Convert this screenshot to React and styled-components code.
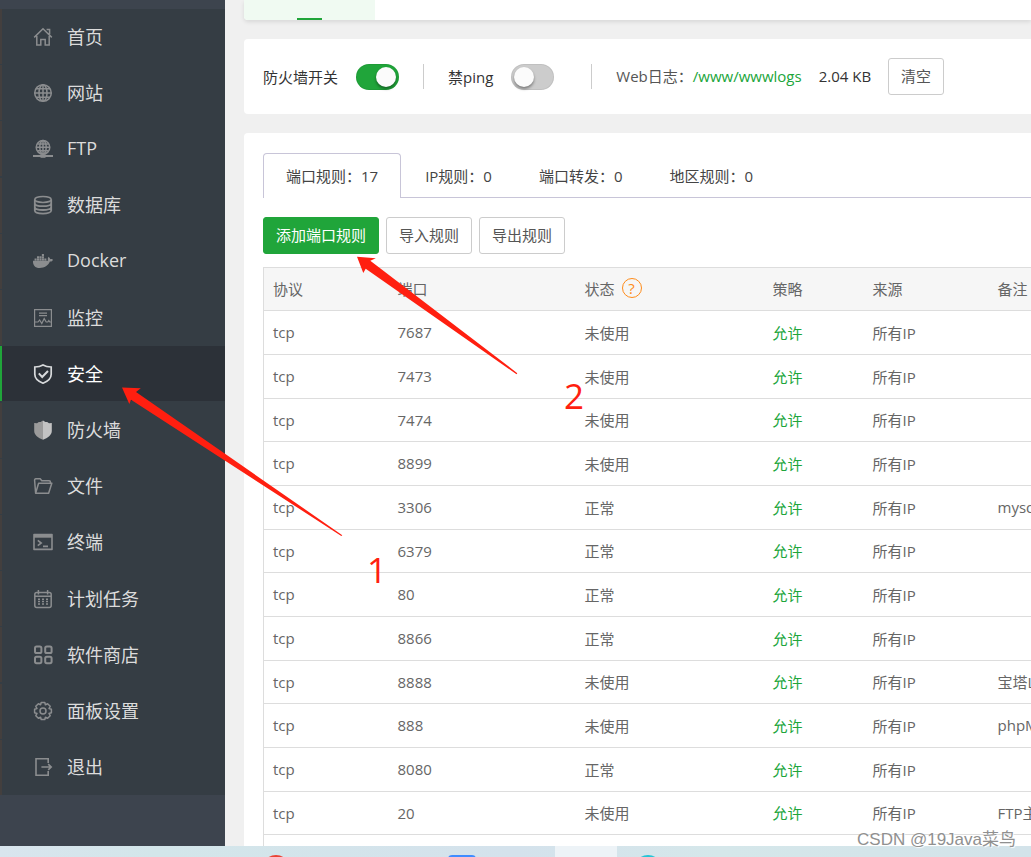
import React, { useState } from "react";
import styled, { createGlobalStyle } from "styled-components";
import { FaDocker } from "react-icons/fa";

const GlobalStyle = createGlobalStyle`
  * {
    box-sizing: border-box;
  }
  body {
    margin: 0;
    overflow: hidden;
    font-family: "Open Sans", "Noto Sans CJK SC", sans-serif;
    font-size: 15px;
    color: #666;
  }
  button, input {
    font: inherit;
    margin: 0;
  }
`;

const Screen = styled.div`
  position: relative;
  height: 100vh;
  display: flex;
  flex-direction: column;
  overflow: hidden;
`;

const Panel = styled.div`
  flex: 1;
  min-height: 0;
  display: flex;
  overflow: hidden;
  background: #f0f0f0;
`;

//Sidebar
const Sidebar = styled.nav`
  flex: 0 0 225px;
  padding-top: 9px;
  background: #3d444e;
`;

const Menu = styled.ul`
  list-style: none;
  margin: 0;
  padding: 0;
  min-height: 786px;
  display: flex;
  flex-direction: column;
  justify-content: space-between;
  background: #353d44;
`;

const MenuLink = styled.a`
  display: flex;
  align-items: center;
  gap: 14px;
  height: 55px;
  padding-left: 31px;
  border-left: 2px solid ${(props) => (props.$active ? "#20a53a" : "#433f3e")};
  background: ${(props) => (props.$active ? "#2c3138" : "transparent")};
  color: ${(props) => (props.$active ? "#fff" : "#dcdcdc")};
  font-size: 18px;
  text-decoration: none;
  svg {
    flex: none;
    width: 20px;
    height: 20px;
    color: ${(props) => (props.$active ? "#d8dadc" : "#8b8d8f")};
  }
`;

const MenuText = styled.span`
  padding-bottom: 2px;
`;

//Content
const Content = styled.main`
  flex: 1;
  min-width: 0;
  padding-left: 19px;
  overflow: hidden;
  display: flex;
  flex-direction: column;
  gap: 19px;
`;

const TopTabs = styled.div`
  flex: none;
  display: flex;
  height: 20px;
  background: #fff;
  border-radius: 0 0 0 4px;
  box-shadow: 0 2px 4px rgba(0, 0, 0, 0.1);
`;

const TopTab = styled.div`
  width: 131px;
  display: flex;
  justify-content: center;
  align-items: flex-end;
  background: #f0faf2;
  border-radius: 0 0 0 4px;
`;

const TopTabLine = styled.span`
  width: 25px;
  height: 2px;
  background: #20a53a;
`;

const StatusCard = styled.section`
  flex: none;
  display: flex;
  align-items: center;
  height: 75px;
  padding: 0 19px;
  background: #fff;
  border-radius: 4px 0 0 4px;
  color: #333;
  white-space: nowrap;
`;

const SwitchLabel = styled.label`
  display: flex;
  align-items: center;
  gap: 18px;
`;

const Switch = styled.input`
  appearance: none;
  display: flex;
  width: 43px;
  height: 26px;
  padding: 3px;
  border-radius: 13px;
  background: #ccc;
  box-shadow: inset 0 0 0 1px rgba(0, 0, 0, 0.06);
  cursor: pointer;
  &::before {
    content: "";
    width: 20px;
    height: 20px;
    border-radius: 50%;
    background: #fbfbfb;
    box-shadow: 0 2px 3px rgba(0, 0, 0, 0.4);
  }
  &:checked {
    background: #20a53a;
    justify-content: flex-end;
  }
`;

const Divider = styled.span`
  width: 1px;
  height: 25px;
  margin: 0 24px 0 ${(props) => props.$before}px;
  background: #ccc;
`;

const LogLabel = styled.span`
  padding-bottom: 2px;
  color: #555;
`;

const LogPath = styled.a`
  padding-bottom: 2px;
  color: #20a53a;
  text-decoration: none;
`;

const LogSize = styled.span`
  margin: 0 17px;
  padding-bottom: 2px;
`;

const Button = styled.button`
  height: 37px;
  padding: 0 12px 2px;
  border: 1px solid ${(props) => (props.$primary ? "#20a53a" : "#ccc")};
  border-radius: 3px;
  background: ${(props) => (props.$primary ? "#20a53a" : "#fff")};
  color: ${(props) => (props.$primary ? "#fff" : "#555")};
  white-space: nowrap;
  cursor: pointer;
`;

const RulesCard = styled.section`
  flex: none;
  padding: 20px 0 0 19px;
  background: #fff;
  border-radius: 4px 0 0 4px;
`;

const Tabs = styled.div`
  display: flex;
  gap: 1px;
  height: 45px;
  box-shadow: inset 0 -1px 0 #c8c5d8;
`;

const Tab = styled.button`
  padding: 0 22px 2px;
  border: 1px solid ${(props) => (props.$active ? "#c8c5d8" : "transparent")};
  border-bottom: none;
  border-radius: 4px 4px 0 0;
  background: ${(props) => (props.$active ? "#fff" : "transparent")};
  color: #444;
  white-space: nowrap;
  cursor: pointer;
`;

const Toolbar = styled.div`
  display: flex;
  gap: 7px;
  padding: 19px 0 13px;
`;

const Table = styled.table`
  width: 1000px;
  table-layout: fixed;
  border-collapse: collapse;
  border: 1px solid #ddd;
`;

const HeadCell = styled.th`
  width: ${(props) => props.$width};
  height: 43px;
  padding: 0 9px 2px;
  background: #f6f6f6;
  border-bottom: 1px solid #ddd;
  font-weight: 400;
  text-align: left;
`;

const HeadLabel = styled.span`
  display: flex;
  align-items: center;
  gap: 7px;
`;

const Help = styled.a`
  display: flex;
  align-items: center;
  justify-content: center;
  width: 20px;
  height: 20px;
  border: 1px solid #ff8c1a;
  border-radius: 50%;
  color: #ff8c1a;
  text-decoration: none;
`;

const Row = styled.tr`
  height: 44px;
  &:nth-child(3n) {
    height: 43px;
  }
`;

const Cell = styled.td`
  padding: 0 9px 1px;
  border-bottom: 1px solid #ddd;
  color: ${(props) => (props.$allow ? "#20a53a" : "#666")};
  white-space: nowrap;
`;

//Desktop bar under the browser
const Taskbar = styled.footer`
  flex: none;
  display: flex;
  height: 11px;
  padding-left: 245px;
  overflow: hidden;
  background: linear-gradient(90deg, #d9e5ee, #d3e6ea 15%, #d4e2ec 50%, #d5e7ea 70%, #d3e3ea);
`;

const TaskSlot = styled.span`
  flex: 0 0 62px;
  display: flex;
  justify-content: center;
  padding-top: 9px;
  background: ${(props) => (props.$active ? "#edf3f7" : "transparent")};
`;

const TaskIcon = styled.span`
  flex: none;
  width: 28px;
  height: 28px;
  border-radius: ${(props) => (props.$square ? "4px" : "50%")};
  background: ${(props) => props.$color};
`;

//Marks drawn over the page
const Marks = styled.svg`
  position: absolute;
  top: 0;
  left: 0;
  pointer-events: none;
`;

const StepNumber = styled.span`
  position: absolute;
  left: ${(props) => props.$x}px;
  top: ${(props) => props.$y}px;
  font-size: 35px;
  line-height: 36px;
  color: #ff1f10;
`;

const Watermark = styled.span`
  position: absolute;
  right: 15px;
  bottom: 5px;
  font-family: "Liberation Sans", "Noto Sans CJK SC", sans-serif;
  font-size: 17px;
  line-height: 24px;
  color: #909090;
  text-shadow: 1px 1px 1px #fff;
`;

const Icon = ({ children }) => (
  <svg viewBox="0 0 20 20" fill="none" stroke="currentColor" strokeWidth="1.5" aria-hidden="true">
    {children}
  </svg>
);

const icons = {
  home: (
    <Icon>
      <path d="M1.2 10.4 10 1.8l8.800 8.600M3.800 9v9h4v-5.400h4.400V18h4V9M13.600 2.600h3v4.600" />
    </Icon>
  ),
  globe: (
    <Icon>
      <circle cx="10" cy="10" r="8.3" />
      <ellipse cx="10" cy="10" rx="4" ry="8.3" />
      <path d="M10 1.7v16.6M1.7 10h16.6M3 5.8h14M3 14.2h14" />
    </Icon>
  ),
  ftp: (
    <Icon>
      <circle cx="10" cy="8.3" r="6.8" />
      <ellipse cx="10" cy="8.3" rx="3.2" ry="6.8" />
      <path d="M10 1.5v15M3.2 8.3h13.6M4.4 4.9h11.2M4.4 11.7h11.2" />
      <path d="M0 17h20" strokeWidth="2" />
      <path d="M7.5 17h5" strokeWidth="3.6" />
    </Icon>
  ),
  database: (
    <Icon>
      <ellipse cx="10" cy="4.4" rx="8.2" ry="3" />
      <path d="M1.8 4.4v11.200c0 1.800 3.600 3 8.200 3s8.200-1.200 8.200-3V4.400M1.800 8.200c0 1.800 3.600 3 8.200 3s8.200-1.200 8.200-3M1.800 12c0 1.800 3.600 3 8.200 3s8.200-1.200 8.200-3" strokeWidth="1.800" />
    </Icon>
  ),
  docker: <FaDocker aria-hidden="true" />,
  monitor: (
    <Icon>
      <path d="M1.6 1.6h16.8v16.8H1.6zM6 5.2h8M6 7.6h8" strokeWidth="1.2" />
      <path d="M2 14h3l1.6-2 2.2 3.6 2.4-5 2 3.4h1.6l1-1.4 1 1.4h1.4" strokeWidth="1.2" />
    </Icon>
  ),
  safe: (
    <Icon>
      <path d="M10 .9C7.4 2.4 4.8 2.9 1.8 3v7.2c0 4.2 3.6 7.2 8.2 9 4.6-1.8 8.2-4.8 8.2-9V3c-3-.1-5.600-.6-8.200-2.100z" strokeWidth="1.7" />
      <path d="m5.8 9.4 3.4 3.6 5.8-6" strokeWidth="2" />
    </Icon>
  ),
  firewall: (
    <Icon>
      <path d="M10 .4 7.6 2H5.8L4 3.2 1.2 3v8c0 4 4 7 8.8 8.8z" fill="#9b9b9b" stroke="none" />
      <path d="M10 .4 12.4 2h1.8L16 3.2l2.8-.2v8c0 4-4 7-8.8 8.8z" fill="#c3c3c3" stroke="none" />
    </Icon>
  ),
  folder: (
    <Icon>
      <path d="M2.6 17 1.6 4.2c0-.8.4-1.4 1.2-1.4h4.4l1.6 2h7.4c.8 0 1.2.4 1.2 1.2v1.2M2.6 17.2h13L18.8 7.2H5.6z" strokeLinejoin="round" />
    </Icon>
  ),
  terminal: (
    <Icon>
      <path d="M1 2.6h18v14.8H1z" strokeLinejoin="round" strokeWidth="1.6" />
      <path d="M1 4.2h18" strokeWidth="3" />
      <path d="m4.8 8.4 3.4 2.6-3.4 2.6M10 14.4h5" strokeWidth="1.6" />
    </Icon>
  ),
  calendar: (
    <Icon>
      <rect x="1.8" y="3.6" width="16.4" height="14.8" rx="2" />
      <path d="M5.4 1v4.4M14.6 1v4.4M2 7.2h16" />
      <path d="M5 10.2h10M5 12.6h10M5 15h10" strokeDasharray="2 2" />
    </Icon>
  ),
  apps: (
    <Icon>
      <rect x="2" y="1.6" width="6.4" height="6.4" rx="1.6" strokeWidth="2" />
      <rect x="12.200" y="1.6" width="6.4" height="6.4" rx="1.6" strokeWidth="2" />
      <rect x="2" y="11.800" width="6.4" height="6.4" rx="1.6" strokeWidth="2" />
      <rect x="12.200" y="11.800" width="6.4" height="6.4" rx="1.6" strokeWidth="2" />
    </Icon>
  ),
  settings: (
    <Icon>
      <path d="M8.2 1.5h3.6l.6 2.2 2.2-1 2.6 2.6-1.2 2.2 2.4.8v3.4l-2.4.8 1.2 2.2-2.6 2.6-2.2-1-.6 2.2H8.2l-.6-2.2-2.2 1-2.6-2.6L4 12.5l-2.400-.8V8.300L4 7.500 2.800 5.300l2.600-2.600 2.200 1z" strokeLinejoin="round" />
      <circle cx="10" cy="10" r="3" />
    </Icon>
  ),
  logout: (
    <Icon>
      <path d="M15.2 6V1.8H3v16.4h12.2V14M8.4 10h9.400M15.200 7.200l3 2.800-3 2.800" strokeWidth="1.6" />
    </Icon>
  ),
};

const menu = [
  { icon: "home", text: "首页" },
  { icon: "globe", text: "网站" },
  { icon: "ftp", text: "FTP" },
  { icon: "database", text: "数据库" },
  { icon: "docker", text: "Docker" },
  { icon: "monitor", text: "监控" },
  { icon: "safe", text: "安全" },
  { icon: "firewall", text: "防火墙" },
  { icon: "folder", text: "文件" },
  { icon: "terminal", text: "终端" },
  { icon: "calendar", text: "计划任务" },
  { icon: "apps", text: "软件商店" },
  { icon: "settings", text: "面板设置" },
  { icon: "logout", text: "退出" },
];

const tabs = ["端口规则：17", "IP规则：0", "端口转发：0", "地区规则：0"];

const rules = [
  { port: "7687", status: "未使用" },
  { port: "7473", status: "未使用" },
  { port: "7474", status: "未使用" },
  { port: "8899", status: "未使用" },
  { port: "3306", status: "正常", remark: "mysql" },
  { port: "6379", status: "正常" },
  { port: "80", status: "正常" },
  { port: "8866", status: "正常" },
  { port: "8888", status: "未使用", remark: "宝塔Linux面板" },
  { port: "888", status: "未使用", remark: "phpMyAdmin" },
  { port: "8080", status: "正常" },
  { port: "20", status: "未使用", remark: "FTP主动模式" },
];

export default function App() {
  const [firewall, setFirewall] = useState(true);
  const [noPing, setNoPing] = useState(false);
  const [tab, setTab] = useState(0);

  return (
    <Screen>
      <GlobalStyle />
      <Panel>
        <Sidebar>
          <Menu>
            {menu.map((item) => (
              <li key={item.icon}>
                <MenuLink href="#" $active={item.icon === "safe"}>
                  {icons[item.icon]}
                  <MenuText>{item.text}</MenuText>
                </MenuLink>
              </li>
            ))}
          </Menu>
        </Sidebar>
        <Content>
          <TopTabs>
            <TopTab>
              <TopTabLine />
            </TopTab>
          </TopTabs>
          <StatusCard>
            <SwitchLabel>
              防火墙开关
              <Switch type="checkbox" checked={firewall} onChange={(e) => setFirewall(e.target.checked)} />
            </SwitchLabel>
            <Divider $before={24} />
            <SwitchLabel>
              禁ping
              <Switch type="checkbox" checked={noPing} onChange={(e) => setNoPing(e.target.checked)} />
            </SwitchLabel>
            <Divider $before={37} />
            <LogLabel>Web日志：</LogLabel>
            <LogPath href="#">/www/wwwlogs</LogPath>
            <LogSize>2.04 KB</LogSize>
            <Button>清空</Button>
          </StatusCard>
          <RulesCard>
            <Tabs>
              {tabs.map((text, i) => (
                <Tab key={text} $active={tab === i} onClick={() => setTab(i)}>
                  {text}
                </Tab>
              ))}
            </Tabs>
            <Toolbar>
              <Button $primary>添加端口规则</Button>
              <Button>导入规则</Button>
              <Button>导出规则</Button>
            </Toolbar>
            <Table>
              <thead>
                <tr>
                  <HeadCell $width="125px">协议</HeadCell>
                  <HeadCell $width="187px">端口</HeadCell>
                  <HeadCell $width="188px">
                    <HeadLabel>
                      状态<Help href="#">?</Help>
                    </HeadLabel>
                  </HeadCell>
                  <HeadCell $width="100px">策略</HeadCell>
                  <HeadCell $width="125px">来源</HeadCell>
                  <HeadCell $width="auto">备注</HeadCell>
                </tr>
              </thead>
              <tbody>
                {rules.map((rule) => (
                  <Row key={rule.port}>
                    <Cell>tcp</Cell>
                    <Cell>{rule.port}</Cell>
                    <Cell>{rule.status}</Cell>
                    <Cell $allow>允许</Cell>
                    <Cell>所有IP</Cell>
                    <Cell>{rule.remark}</Cell>
                  </Row>
                ))}
                <Row>
                  <Cell colSpan={6} />
                </Row>
              </tbody>
            </Table>
          </RulesCard>
        </Content>
      </Panel>
      <Taskbar>
        <TaskSlot>
          <TaskIcon $color="#ea4335" />
        </TaskSlot>
        <TaskSlot />
        <TaskSlot />
        <TaskSlot>
          <TaskIcon $color="#3f8cff" $square />
        </TaskSlot>
        <TaskSlot />
        <TaskSlot $active />
        <TaskSlot>
          <TaskIcon $color="#25c4d6" />
        </TaskSlot>
      </Taskbar>
      <Marks width="560" height="560" viewBox="0 0 560 560" fill="#ff1f10" aria-hidden="true">
        <path d="M122 387.6 140.8 388.3 136 392 342.3 535.2 341.3 536 131 399.7 129.3 404z" />
        <path d="M357 256.7 375.8 258.3 370.3 260.7 517.3 373.2 516.5 374.3 365.7 268.7 363.3 273z" />
      </Marks>
      <StepNumber $x={367} $y={552}>1</StepNumber>
      <StepNumber $x={564} $y={378}>2</StepNumber>
      <Watermark>CSDN @19Java菜鸟</Watermark>
    </Screen>
  );
}
